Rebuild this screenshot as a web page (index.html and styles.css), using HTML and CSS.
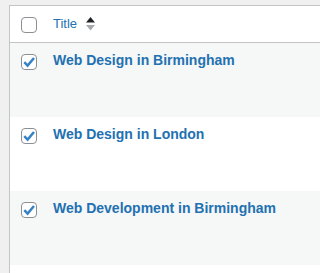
FILE: index.html
```html
<!DOCTYPE html>
<html>
<head>
<meta charset="utf-8">
<link rel="stylesheet" href="styles.css">
</head>
<body>
<div class="table">
  <div class="row head">
    <div class="cb"><span class="box"></span></div>
    <div class="title-col">
      <a class="sort-link">Title</a>
      <span class="sort">
        <svg width="9" height="14" viewBox="0 0 9 14"><polygon points="4.5,0 9,5.5 0,5.5" fill="#1d2327"/><polygon points="0,8 9,8 4.5,13.5" fill="#a7aaad"/></svg>
      </span>
    </div>
  </div>
  <div class="row odd">
    <div class="cb"><span class="box"><svg width="14" height="14" viewBox="0 0 14 14"><path d="M2.3 7.2 L5.6 10.6 L12 3" fill="none" stroke="#3582c4" stroke-width="2.5"/></svg></span></div>
    <div class="title-col"><a class="row-title">Web Design in Birmingham</a></div>
  </div>
  <div class="row">
    <div class="cb"><span class="box"><svg width="14" height="14" viewBox="0 0 14 14"><path d="M2.3 7.2 L5.6 10.6 L12 3" fill="none" stroke="#3582c4" stroke-width="2.5"/></svg></span></div>
    <div class="title-col"><a class="row-title">Web Design in London</a></div>
  </div>
  <div class="row odd">
    <div class="cb"><span class="box"><svg width="14" height="14" viewBox="0 0 14 14"><path d="M2.3 7.2 L5.6 10.6 L12 3" fill="none" stroke="#3582c4" stroke-width="2.5"/></svg></span></div>
    <div class="title-col"><a class="row-title">Web Development in Birmingham</a></div>
  </div>
  <div class="row last"></div>
</div>
</body>
</html>
```

FILE: styles.css
```css
html, body {
  margin: 0;
  padding: 0;
  background: #f0f0f1;
}
body {
  font-family: "Liberation Sans", Arial, sans-serif;
  font-size: 13px;
  color: #3c434a;
}
.table {
  margin: 5px 0 0 9px;
  background: #fff;
  border-top: 1px solid #c3c4c7;
  border-left: 1px solid #c3c4c7;
}
.row {
  display: grid;
  grid-template-columns: 43px 1fr;
  height: 74px;
  box-sizing: border-box;
}
.row.odd {
  background: #f6f7f7;
}
.row.head {
  height: 37px;
  border-bottom: 1px solid #c3c4c7;
}
.row.last {
  height: 8px;
}
.cb {
  padding: 11px 0 0 11px;
}
.box {
  display: block;
  width: 16px;
  height: 16px;
  box-sizing: border-box;
  border: 1px solid #8c8f94;
  border-radius: 4px;
  background: #fff;
}
.box svg {
  display: block;
  margin: 0;
}
.title-col {
  padding: 7px 0 0 0;
  line-height: 21px;
  white-space: nowrap;
}
.head .title-col {
  padding: 8px 0 0 0;
  line-height: 19.5px;
  display: flex;
  align-items: flex-start;
}
.sort-link {
  color: #2271b1;
  font-size: 13px;
}
.sort {
  margin-left: 9px;
  padding-top: 3px;
}
.sort svg {
  display: block;
}
.row-title {
  color: #2271b1;
  font-size: 14px;
  font-weight: 700;
}
```
